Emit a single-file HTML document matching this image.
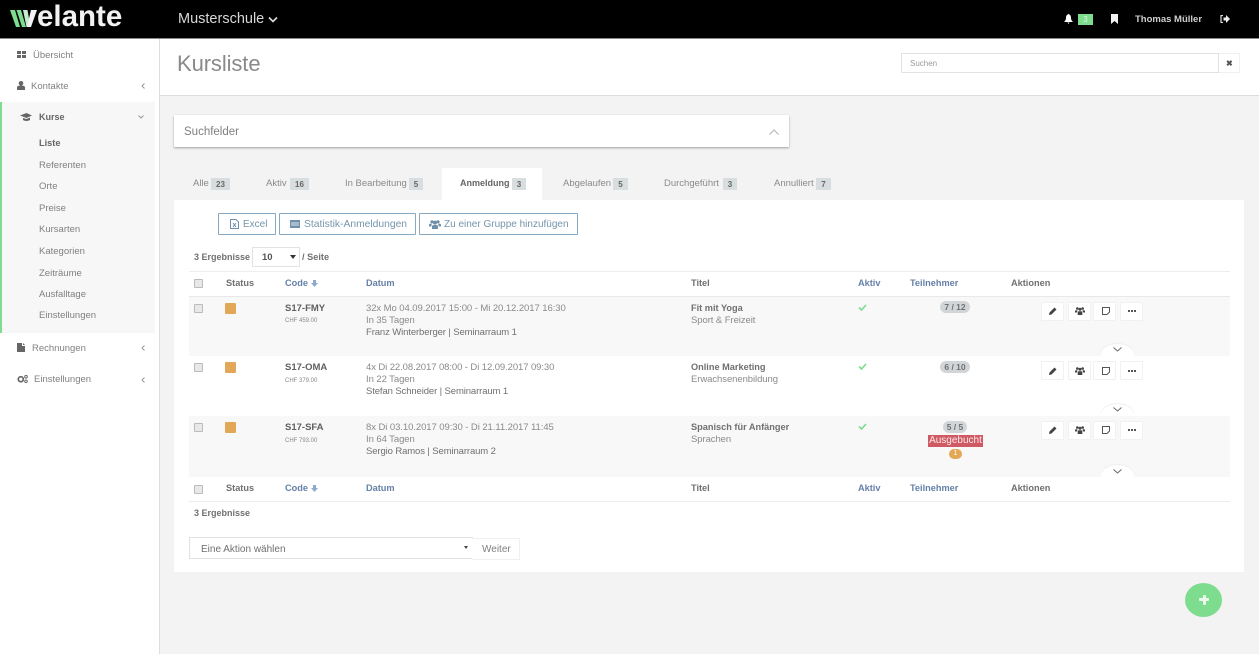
<!DOCTYPE html>
<html lang="de"><head><meta charset="utf-8"><title>Kursliste</title>
<style>
html,body{margin:0;padding:0}
body{width:1259px;height:654px;overflow:hidden;position:relative;background:#f3f3f4;font-family:"Liberation Sans",sans-serif;font-size:10px;color:#777}
.a,.t{position:absolute}
.t{white-space:nowrap;line-height:14px;margin-top:1px}
.b{font-weight:bold}
.dk{color:#666}
.h{font-weight:bold;font-size:9.200px;color:#707070}
.bl{color:#6580a8;font-weight:bold;font-size:9.200px}
.d{font-size:9.500px;color:#8a8a8a;letter-spacing:-.07px}
.p{font-size:9.500px;color:#707070;letter-spacing:-.11px}
svg{position:absolute;display:block}
.nav{color:#808080;font-size:9.500px}
.sub{left:39px;color:#808080;font-size:9.500px}
.tab{font-size:9.500px;color:#8a8a8a;top:177px;margin-top:0}
.bd{position:absolute;background:#d8dde0;color:#666;font-size:8px;font-weight:bold;text-align:center;height:12px;line-height:13px;top:178px}
.btn{position:absolute;top:213px;height:20px;border:1px solid #86a9c1;border-radius:1px;background:#fff;color:#7595ab;line-height:21px;white-space:nowrap}
.cb{position:absolute;left:194px;width:7px;height:7px;border:1px solid #bbb;border-radius:1px;background:#e8e8e8}
.st{position:absolute;left:225px;width:11px;height:11px;background:#e3a857;border-radius:1px}
.ab{position:absolute;width:21px;height:17px;background:#fff;border:1px solid #f1f1f1;border-radius:1px}
.pill{position:absolute;background:#d2d5d8;color:#707070;font-size:8.500px;font-weight:bold;text-align:center;border-radius:6px;height:12px;line-height:12px}
.ex{position:absolute;left:1101px;width:33px;height:12px;background:#fff;border-radius:17px 17px 0 0/11px 11px 0 0;box-shadow:0 -1px 1px #eee}
</style></head><body>

<!-- top bar -->
<div class="a" style="left:0;top:0;width:1259px;height:38px;background:#000;border-bottom:1px solid #888"></div>
<div class="t b" style="left:37px;top:0;margin-top:0;line-height:33px;font-size:29.500px;color:#f2f2f2">elante</div>
<svg style="left:10px;top:10px" width="27" height="17" viewBox="0 0 27 17"><title>w</title><path d="M0 0h5l5 17H6zM6.500 0h4.500l5 17h-4z" fill="#7ddc8e"/><path d="M13 0h4.500l3 17h-4z" fill="#c8ecd0"/><path d="M17 17l4-17h6l-6 17z" fill="#f2f2f2"/></svg>
<div class="t" style="left:178px;top:9px;line-height:18px;font-size:14.500px;color:#d8d8d8">Musterschule</div>
<svg style="left:268px;top:16px" width="10" height="7" viewBox="0 0 10 7"><path d="M1 1.500l4 4 4-4" fill="none" stroke="#ddd" stroke-width="1.600"/></svg>
<svg style="left:1064px;top:14px" width="9" height="10" viewBox="0 0 9 10"><path d="M4.500 0C2.500 1 2 2 2 4c0 2-1 3-2 4h9C8 7 7 6 7 4c0-2-.5-3-2.500-4zM3.500 8.500h2L4.500 10z" fill="#fff"/></svg>
<div class="a" style="left:1078px;top:14px;width:15px;height:11px;background:#7ddc8e;color:#d8f8dc;font-size:8px;text-align:center;line-height:12px">3</div>
<svg style="left:1111px;top:14px" width="7" height="10" viewBox="0 0 7 10"><path d="M0 0h7v10L3.500 7 0 10z" fill="#f2f2f2"/></svg>
<div class="t b" style="left:1135px;top:12px;font-size:9.500px;color:#cfcfcf">Thomas Müller</div>
<svg style="left:1220px;top:15px" width="10" height="8" viewBox="0 0 10 8"><path d="M3 .5H1v7h2" fill="none" stroke="#ddd" stroke-width="1.200"/><path d="M3.500 2.500H6V0l4 4-4 4V5.500H3.500z" fill="#eee"/></svg>

<!-- sidebar -->
<div class="a" style="left:0;top:39px;width:159px;height:615px;background:#fff;border-right:1px solid #ddd"></div>
<div class="a" style="left:0;top:102px;width:153px;height:231px;background:#f7f7f7;border-left:2px solid #7ddc8e"></div>
<svg style="left:17px;top:51px" width="9" height="7" viewBox="0 0 9 7"><path d="M0 0h4v3H0zM5 0h4v3H5zM0 4h4v3H0zM5 4h4v3H5z" fill="#666"/></svg>
<div class="t nav" style="left:33px;top:48px">Übersicht</div>
<svg style="left:17px;top:81px" width="8" height="9" viewBox="0 0 8 9"><circle cx="4" cy="2.300" r="2.300" fill="#666"/><path d="M0 9V6.500C0 5 1.500 4.500 4 4.500S8 5 8 6.500V9z" fill="#666"/></svg>
<div class="t nav" style="left:31px;top:79px">Kontakte</div>
<svg style="left:141px;top:83px" width="4" height="6" viewBox="0 0 4 6"><path d="M3.500.5L1 3l2.500 2.500" fill="none" stroke="#999"/></svg>
<svg style="left:20px;top:113px" width="12" height="8" viewBox="0 0 12 8"><path d="M0 2.500L6.500 0 12 2.500 6.500 5zM3 5v2c2 1.300 5 1.300 7 0V4.500L6.500 6z" fill="#666"/></svg>
<div class="t b dk" style="left:39px;top:109px;font-size:9px">Kurse</div>
<svg style="left:138px;top:115px" width="6" height="4" viewBox="0 0 6 4"><path d="M.5.500L3 3 5.500.500" fill="none" stroke="#999"/></svg>
<div class="t b dk" style="left:39px;top:135px;font-size:9.200px">Liste</div>
<div class="t sub" style="top:158px">Referenten</div>
<div class="t sub" style="top:179px">Orte</div>
<div class="t sub" style="top:201px">Preise</div>
<div class="t sub" style="top:222px">Kursarten</div>
<div class="t sub" style="top:244px">Kategorien</div>
<div class="t sub" style="top:266px">Zeiträume</div>
<div class="t sub" style="top:287px">Ausfalltage</div>
<div class="t sub" style="top:308px">Einstellungen</div>
<svg style="left:17px;top:343px" width="8" height="9" viewBox="0 0 8 9"><path d="M0 0h5v3h3v6H0zM6 0l2 2H6z" fill="#666"/></svg>
<div class="t nav" style="left:32px;top:341px">Rechnungen</div>
<svg style="left:141px;top:345px" width="4" height="6" viewBox="0 0 4 6"><path d="M3.500.5L1 3l2.500 2.500" fill="none" stroke="#999"/></svg>
<svg style="left:17px;top:375px" width="11" height="8" viewBox="0 0 11 8"><circle cx="3.800" cy="4.200" r="2.500" fill="none" stroke="#666" stroke-width="1.700"/><circle cx="9" cy="1.700" r="1.300" fill="none" stroke="#666"/><circle cx="9" cy="6.300" r="1.300" fill="none" stroke="#666"/></svg>
<div class="t nav" style="left:34px;top:372px">Einstellungen</div>
<svg style="left:141px;top:377px" width="4" height="6" viewBox="0 0 4 6"><path d="M3.500.5L1 3l2.500 2.500" fill="none" stroke="#999"/></svg>

<!-- page header -->
<div class="a" style="left:160px;top:39px;width:1099px;height:56px;background:#fff;border-bottom:1px solid #ddd"></div>
<div class="t" style="left:177px;top:50px;line-height:26px;font-size:22px;color:#8a8a8a;letter-spacing:-.1px">Kursliste</div>
<div class="a" style="left:901px;top:53px;width:316px;height:18px;background:#fff;border:1px solid #e2e2e2"></div>
<div class="t" style="left:910px;top:56px;font-size:8px;color:#999">Suchen</div>
<div class="a" style="left:1219px;top:53px;width:20px;height:18px;background:#fff;border:1px solid #f0f0f0;border-left:0"></div>
<div class="t b" style="left:1226px;top:56px;font-size:8px;color:#555">✖</div>

<!-- Suchfelder -->
<div class="a" style="left:174px;top:115px;width:615px;height:32px;background:#fff;box-shadow:0 1px 2px rgba(0,0,0,.35)"></div>
<div class="t" style="left:184px;top:124px;font-size:11.500px;color:#808080">Suchfelder</div>
<svg style="left:769px;top:129px" width="10" height="6" viewBox="0 0 10 6"><path d="M.5 5.500L5 1l4.500 4.500" fill="none" stroke="#bbb" stroke-width="1.200"/></svg>

<!-- tabs -->
<div class="a" style="left:442px;top:168px;width:100px;height:33px;background:#fff"></div>
<div class="t tab" style="left:193px">Alle</div><div class="bd" style="left:211px;width:19px">23</div>
<div class="t tab" style="left:266px">Aktiv</div><div class="bd" style="left:290px;width:19px">16</div>
<div class="t tab" style="left:345px">In Bearbeitung</div><div class="bd" style="left:409px;width:14px">5</div>
<div class="t tab b" style="left:460px;top:176px;color:#666;font-size:9px">Anmeldung</div><div class="bd" style="left:512px;width:14px">3</div>
<div class="t tab" style="left:563px">Abgelaufen</div><div class="bd" style="left:613px;width:15px">5</div>
<div class="t tab" style="left:664px">Durchgeführt</div><div class="bd" style="left:723px;width:14px">3</div>
<div class="t tab" style="left:774px">Annulliert</div><div class="bd" style="left:816px;width:15px">7</div>

<!-- main card -->
<div class="a" style="left:174px;top:200px;width:1070px;height:372px;background:#fff"></div>
<div class="a" style="left:442px;top:198px;width:100px;height:4px;background:#fff"></div>

<div class="btn" style="left:218px;width:56px;font-size:10px"><span style="position:absolute;left:24px">Excel</span></div>
<svg style="left:230px;top:219px" width="9" height="10" viewBox="0 0 9 10"><path d="M.5.500h5.500l2.500 2.500v6.500H.5z" fill="none" stroke="#6f90a8"/><path d="M3 4l3 4M6 4L3 8" stroke="#6f90a8"/></svg>
<div class="btn" style="left:279px;width:135px;font-size:10.300px"><span style="position:absolute;left:24px">Statistik-Anmeldungen</span></div>
<svg style="left:290px;top:220px" width="10" height="8" viewBox="0 0 10 8"><path d="M0 0h10v8H0z" fill="#6f90a8"/><path d="M1 2.500h8v1H1zM1 4.500h8v1H1z" fill="#dfe8ef"/></svg>
<div class="btn" style="left:419px;width:157px;font-size:10px"><span style="position:absolute;left:24px">Zu einer Gruppe hinzufügen</span></div>
<svg style="left:429px;top:220px" width="12" height="9" viewBox="0 0 12 9"><circle cx="3" cy="1.800" r="1.600" fill="#6f90a8"/><circle cx="9" cy="1.800" r="1.600" fill="#6f90a8"/><circle cx="6" cy="2.600" r="2" fill="#6f90a8"/><path d="M0 6.500V5q0-1.400 1.500-1.400h1.300L2.300 6.500zM12 6.500V5q0-1.400-1.500-1.400H9.200l.5 2.900zM3 9V6.500Q3 5 5 5h2q2 0 2 1.500V9z" fill="#6f90a8"/></svg>

<div class="t h" style="left:194px;top:249px;font-size:9px">3 Ergebnisse</div>
<div class="a" style="left:252px;top:247px;width:46px;height:18px;border:1px solid #e2e2e2;background:#fff"></div>
<div class="t b" style="left:262px;top:250px;font-size:9.500px;color:#555">10</div>
<div class="a" style="left:290px;top:255px;border:3px solid transparent;border-top:4px solid #333;border-bottom:0"></div>
<div class="t h" style="left:302px;top:249px">/ Seite</div>

<!-- table -->
<div class="a" style="left:189px;top:271px;width:1041px;height:1px;background:#eee"></div>
<div class="a" style="left:189px;top:296px;width:1041px;height:1px;background:#e8e8e8"></div>
<div class="a" style="left:189px;top:297px;width:1041px;height:59px;background:#f8f8f8"></div>
<div class="a" style="left:189px;top:416px;width:1041px;height:61px;background:#f8f8f8"></div>
<div class="a" style="left:189px;top:501px;width:1041px;height:1px;background:#ececec"></div>

<!-- head -->
<div class="cb" style="top:279px"></div>
<div class="t h" style="left:226px;top:275px">Status</div>
<div class="t bl" style="left:285px;top:275px">Code</div>
<svg style="left:311px;top:280px" width="7" height="7" viewBox="0 0 7 7"><path d="M2 0h3v3h2L3.500 7 0 3h2z" fill="#8fa8d0"/></svg>
<div class="t bl" style="left:366px;top:275px">Datum</div>
<div class="t h" style="left:691px;top:275px">Titel</div>
<div class="t bl" style="left:858px;top:275px">Aktiv</div>
<div class="t bl" style="left:910px;top:275px">Teilnehmer</div>
<div class="t h" style="left:1011px;top:275px">Aktionen</div>

<!-- row 1 -->
<div class="cb" style="top:304px"></div><div class="st" style="top:303px"></div>
<div class="t b" style="left:285px;top:301px;font-size:9.500px;color:#606060">S17-FMY</div>
<div class="t" style="left:285px;top:313px;font-size:6px;color:#888">CHF 459.00</div>
<div class="t d" style="left:366px;top:301px">32x Mo 04.09.2017 15:00 - Mi 20.12.2017 16:30</div>
<div class="t d" style="left:366px;top:313px">In 35 Tagen</div>
<div class="t p" style="left:366px;top:325px">Franz Winterberger | Seminarraum 1</div>
<div class="t h" style="left:691px;top:300px">Fit mit Yoga</div>
<div class="t d" style="left:691px;top:313px">Sport &amp; Freizeit</div>
<svg style="left:858px;top:304px" width="9" height="7" viewBox="0 0 9 7"><path d="M1 3.500l2.500 2.500L8 1" fill="none" stroke="#7ddc8e" stroke-width="1.600"/></svg>
<div class="pill" style="left:940px;top:301px;width:30px">7 / 12</div>
<div class="ab" style="left:1041px;top:302px"></div><div class="ab" style="left:1068px;top:302px"></div><div class="ab" style="left:1093px;top:302px"></div><div class="ab" style="left:1120px;top:302px"></div>
<svg style="left:1049px;top:307px" width="8" height="8" viewBox="0 0 8 8"><path d="M0 8l.5-2.500L5.500.5l2 2-5 5z" fill="#444"/></svg>
<svg style="left:1075px;top:307px" width="10" height="8" viewBox="0 0 10 8"><circle cx="2.300" cy="1.500" r="1.300" fill="#444"/><circle cx="7.700" cy="1.500" r="1.300" fill="#444"/><circle cx="5" cy="2.200" r="1.500" fill="#444"/><path d="M0 5.500V4.300q0-1 1-1h1.400L2 5.500zM10 5.500V4.300q0-1-1-1H7.600L8 5.500zM2.700 8V5.200q0-1 1-1h2.600q1 0 1 1V8z" fill="#444"/></svg>
<svg style="left:1102px;top:307px" width="8" height="8" viewBox="0 0 8 8"><path d="M.5.500h7v4.500L5 7.500H.5z" fill="none" stroke="#555"/></svg>
<svg style="left:1128px;top:310px" width="8" height="2" viewBox="0 0 8 2"><path d="M0 0h2v2H0zM3 0h2v2H3zM6 0h2v2H6z" fill="#555"/></svg>
<div class="ex" style="top:344px"></div>
<svg style="left:1113px;top:347px" width="9" height="5" viewBox="0 0 9 5"><path d="M.5.500l4 3.500 4-3.500" fill="none" stroke="#666"/></svg>

<!-- row 2 -->
<div class="cb" style="top:363px"></div><div class="st" style="top:362px"></div>
<div class="t b" style="left:285px;top:360px;font-size:9.500px;color:#606060">S17-OMA</div>
<div class="t" style="left:285px;top:373px;font-size:6px;color:#888">CHF 379.00</div>
<div class="t d" style="left:366px;top:360px;letter-spacing:-.09px">4x Di 22.08.2017 08:00 - Di 12.09.2017 09:30</div>
<div class="t d" style="left:366px;top:372px">In 22 Tagen</div>
<div class="t p" style="left:366px;top:384px">Stefan Schneider | Seminarraum 1</div>
<div class="t h" style="left:691px;top:359px">Online Marketing</div>
<div class="t d" style="left:691px;top:372px">Erwachsenenbildung</div>
<svg style="left:858px;top:363px" width="9" height="7" viewBox="0 0 9 7"><path d="M1 3.500l2.500 2.500L8 1" fill="none" stroke="#7ddc8e" stroke-width="1.600"/></svg>
<div class="pill" style="left:940px;top:361px;width:30px">6 / 10</div>
<div class="ab" style="left:1041px;top:361px"></div><div class="ab" style="left:1068px;top:361px"></div><div class="ab" style="left:1093px;top:361px"></div><div class="ab" style="left:1120px;top:361px"></div>
<svg style="left:1049px;top:367px" width="8" height="8" viewBox="0 0 8 8"><path d="M0 8l.5-2.500L5.500.5l2 2-5 5z" fill="#444"/></svg>
<svg style="left:1075px;top:367px" width="10" height="8" viewBox="0 0 10 8"><circle cx="2.300" cy="1.500" r="1.300" fill="#444"/><circle cx="7.700" cy="1.500" r="1.300" fill="#444"/><circle cx="5" cy="2.200" r="1.500" fill="#444"/><path d="M0 5.500V4.300q0-1 1-1h1.400L2 5.500zM10 5.500V4.300q0-1-1-1H7.600L8 5.500zM2.700 8V5.200q0-1 1-1h2.600q1 0 1 1V8z" fill="#444"/></svg>
<svg style="left:1102px;top:367px" width="8" height="8" viewBox="0 0 8 8"><path d="M.5.500h7v4.500L5 7.500H.5z" fill="none" stroke="#555"/></svg>
<svg style="left:1128px;top:370px" width="8" height="2" viewBox="0 0 8 2"><path d="M0 0h2v2H0zM3 0h2v2H3zM6 0h2v2H6z" fill="#555"/></svg>
<div class="ex" style="top:404px"></div>
<svg style="left:1113px;top:407px" width="9" height="5" viewBox="0 0 9 5"><path d="M.5.500l4 3.500 4-3.500" fill="none" stroke="#666"/></svg>

<!-- row 3 -->
<div class="cb" style="top:423px"></div><div class="st" style="top:422px"></div>
<div class="t b" style="left:285px;top:420px;font-size:9.500px;color:#606060">S17-SFA</div>
<div class="t" style="left:285px;top:433px;font-size:6px;color:#888">CHF 793.00</div>
<div class="t d" style="left:366px;top:420px">8x Di 03.10.2017 09:30 - Di 21.11.2017 11:45</div>
<div class="t d" style="left:366px;top:432px">In 64 Tagen</div>
<div class="t p" style="left:366px;top:444px">Sergio Ramos | Seminarraum 2</div>
<div class="t h" style="left:691px;top:419px">Spanisch für Anfänger</div>
<div class="t d" style="left:691px;top:432px">Sprachen</div>
<svg style="left:858px;top:423px" width="9" height="7" viewBox="0 0 9 7"><path d="M1 3.500l2.500 2.500L8 1" fill="none" stroke="#7ddc8e" stroke-width="1.600"/></svg>
<div class="pill" style="left:943px;top:421px;width:24px">5 / 5</div>
<div class="a" style="left:928px;top:435px;width:55px;height:12px;background:#cf5a64;color:#fbe9ea;font-size:10px;text-align:center;line-height:12px">Ausgebucht</div>
<div class="a" style="left:949px;top:449px;width:13px;height:10px;border-radius:5px;background:#e3a857;color:#fff;font-size:7px;text-align:center;line-height:10px">1</div>
<div class="ab" style="left:1041px;top:421px"></div><div class="ab" style="left:1068px;top:421px"></div><div class="ab" style="left:1093px;top:421px"></div><div class="ab" style="left:1120px;top:421px"></div>
<svg style="left:1049px;top:426px" width="8" height="8" viewBox="0 0 8 8"><path d="M0 8l.5-2.500L5.500.5l2 2-5 5z" fill="#444"/></svg>
<svg style="left:1075px;top:426px" width="10" height="8" viewBox="0 0 10 8"><circle cx="2.300" cy="1.500" r="1.300" fill="#444"/><circle cx="7.700" cy="1.500" r="1.300" fill="#444"/><circle cx="5" cy="2.200" r="1.500" fill="#444"/><path d="M0 5.500V4.300q0-1 1-1h1.400L2 5.500zM10 5.500V4.300q0-1-1-1H7.600L8 5.500zM2.700 8V5.200q0-1 1-1h2.600q1 0 1 1V8z" fill="#444"/></svg>
<svg style="left:1102px;top:426px" width="8" height="8" viewBox="0 0 8 8"><path d="M.5.500h7v4.500L5 7.500H.5z" fill="none" stroke="#555"/></svg>
<svg style="left:1128px;top:429px" width="8" height="2" viewBox="0 0 8 2"><path d="M0 0h2v2H0zM3 0h2v2H3zM6 0h2v2H6z" fill="#555"/></svg>
<div class="ex" style="top:465px"></div>
<svg style="left:1113px;top:469px" width="9" height="5" viewBox="0 0 9 5"><path d="M.5.500l4 3.500 4-3.500" fill="none" stroke="#666"/></svg>

<!-- foot -->
<div class="cb" style="top:485px"></div>
<div class="t h" style="left:226px;top:480px">Status</div>
<div class="t bl" style="left:285px;top:480px">Code</div>
<svg style="left:311px;top:485px" width="7" height="7" viewBox="0 0 7 7"><path d="M2 0h3v3h2L3.500 7 0 3h2z" fill="#8fa8d0"/></svg>
<div class="t bl" style="left:366px;top:480px">Datum</div>
<div class="t h" style="left:691px;top:480px">Titel</div>
<div class="t bl" style="left:858px;top:480px">Aktiv</div>
<div class="t bl" style="left:910px;top:480px">Teilnehmer</div>
<div class="t h" style="left:1011px;top:480px">Aktionen</div>

<div class="t h" style="left:194px;top:505px;font-size:9px">3 Ergebnisse</div>

<div class="a" style="left:189px;top:537px;width:282px;height:20px;background:#fff;border:1px solid #e2e2e2"></div>
<div class="t" style="left:201px;top:542px;font-size:10px;color:#707070">Eine Aktion wählen</div>
<div class="a" style="left:464px;top:546px;border:2.500px solid transparent;border-top:3.500px solid #444;border-bottom:0"></div>
<div class="a" style="left:472px;top:538px;width:47px;height:20px;background:#fff;border:1px solid #f0f0f0;border-left:0"></div>
<div class="t" style="left:482px;top:542px;font-size:10px;color:#808080">Weiter</div>

<!-- fab -->
<div class="a" style="left:1185px;top:583px;width:37px;height:34px;border-radius:50%;background:#7ddc8e"></div>
<div class="a" style="left:1199px;top:598px;width:10px;height:3px;background:#eaf9ec;border-radius:1px"></div>
<div class="a" style="left:1202.500px;top:594.500px;width:3px;height:10px;background:#eaf9ec;border-radius:1px"></div>
</body></html>
